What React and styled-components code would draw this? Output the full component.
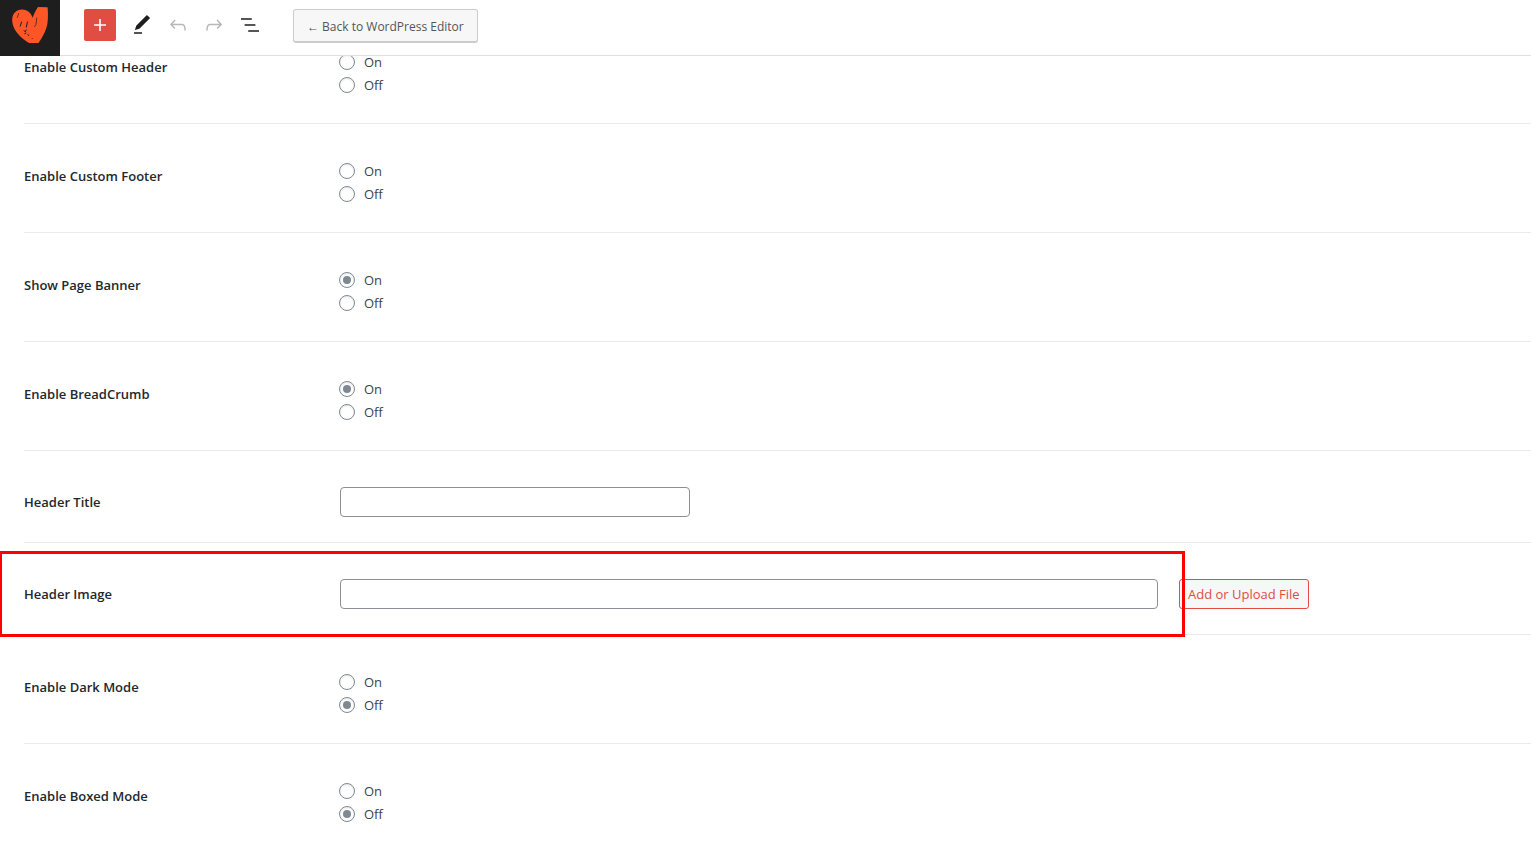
import React, { useLayoutEffect, useRef } from 'react';
import styled, { createGlobalStyle } from 'styled-components';

const GlobalStyle = createGlobalStyle`
	*, *::before, *::after {
		box-sizing: border-box;
	}
	body {
		margin: 0;
		background: #fff;
		color: #3c434a;
		font-family: 'Open Sans', 'Noto Sans', sans-serif;
		font-size: 13px;
	}
`;

const Shell = styled.div`
	display: flex;
	flex-direction: column;
	height: 100vh;
	overflow: hidden;
`;

const Header = styled.header`
	display: flex;
	flex: none;
	height: 56px;
	border-bottom: 1px solid #e0e0e0;
`;

const SiteLink = styled.a`
	flex: none;
	width: 60px;
	height: 56px;
	background: #1e1e1e;

	svg {
		display: block;
	}
`;

const Toolbar = styled.div`
	display: flex;
	align-items: flex-start;
	padding: 9px 24px 0;
`;

const InserterButton = styled.button`
	display: flex;
	align-items: center;
	justify-content: center;
	width: 32px;
	height: 32px;
	margin-right: 8px;
	padding: 0;
	border: 0;
	border-radius: 2px;
	background: #e14d43;
	color: #fff;
`;

const ToolButton = styled.button`
	display: flex;
	align-items: center;
	justify-content: center;
	width: 36px;
	height: 32px;
	padding: 0;
	border: 0;
	background: none;
	color: ${(props) => (props.disabled ? '#b8b8b8' : '#1e1e1e')};
`;

const BackButton = styled.button`
	height: 34px;
	margin-left: 25px;
	padding: 2px 13px 0;
	border: 1px solid #ccc;
	border-bottom-width: 2px;
	border-radius: 3px;
	background: #f7f7f7;
	color: #555;
	font-family: inherit;
	font-size: 12px;
	line-height: 28px;
	white-space: nowrap;
`;

const Main = styled.main`
	flex: 1;
	min-height: 0;
	padding-left: 24px;
	overflow-x: hidden;
	overflow-y: auto;
	scrollbar-width: none;
`;

const Row = styled.div`
	display: grid;
	grid-template-columns: 315px minmax(0, 1fr);
	padding: 36px 0 ${(props) => (props.$compact ? '25px' : '26px')};
	border-bottom: 1px solid #e9e9e9;
`;

const RowLabel = styled.div`
	padding-top: ${(props) => (props.$compact ? '4px' : '5px')};
	color: #23282d;
	font-size: 13px;
	font-weight: 600;
	line-height: 22px;
`;

const Option = styled.label`
	display: flex;
	align-items: flex-start;
	gap: 9px;
	width: max-content;
	height: 23px;
	line-height: 23px;
`;

const Radio = styled.input`
	appearance: none;
	display: grid;
	place-content: center;
	width: 16px;
	height: 16px;
	margin: 3px 0 0;
	border: 1px solid #7e8993;
	border-radius: 50%;
	background: #fff;
	box-shadow: inset 0 1px 2px rgba(0, 0, 0, 0.1);

	&:checked::before {
		content: '';
		width: 8px;
		height: 8px;
		border-radius: 50%;
		background: #7e8993;
	}
`;

const Field = styled.div`
	display: flex;
	gap: 21px;
	margin: 0 1px;
`;

const InputWrap = styled.div`
	position: relative;
	flex: 0 1 ${(props) => (props.$wide ? '818px' : '350px')};
`;

const TextInput = styled.input`
	display: block;
	width: 100%;
	height: 30px;
	padding: 0 8px;
	border: 1px solid #8c8f94;
	border-radius: 4px;
	background: #fff;
	color: #2c3338;
	font: inherit;
`;

const Highlight = styled.div`
	position: absolute;
	top: -28px;
	right: -27px;
	bottom: -28px;
	left: -341px;
	z-index: 1;
	border: 3px solid #f00;
	pointer-events: none;
`;

const UploadButton = styled.button`
	flex: none;
	height: 30px;
	padding: 0 8px;
	border: 1px solid #e14d43;
	border-radius: 3px;
	background: #f6f7f7;
	color: #e14d43;
	font-family: inherit;
	font-size: 13px;
	line-height: 28px;
	white-space: nowrap;
`;

const icons = {
	plus: 'M18 11.2h-5.2V6h-1.6v5.2H6v1.6h5.2V18h1.6v-5.2H18z',
	edit: 'M20.1 5.1L16.9 2 6.2 12.7l-1.3 4.4 4.5-1.3L20.1 5.1zM4 20.8h8v-1.5H4v1.5z',
	undo:
		'M18.3 11.7c-.6-.6-1.4-.9-2.3-.9H6.7l2.9-3.3-1.1-1-4.5 5L8.5 16l1-1-2.7-2.7H16c.5 0 .9.2 1.3.5 1 1 1 3.4 1 4.5v.3h1.5v-.2c0-1.5 0-4.3-1.5-5.7z',
	redo:
		'M15.6 6.5l-1.1 1 2.9 3.3H8c-.9 0-1.7.3-2.3.9-1.4 1.5-1.4 4.2-1.4 5.6v.2h1.5v-.3c0-1.1 0-3.5 1-4.5.3-.3.7-.5 1.3-.5h9.2L14.5 15l1.1 1.1 4.6-4.6-4.6-5z',
	outline: 'M13.8 5.2H3v1.5h10.8V5.2zm-3.6 12v1.5H21v-1.5H10.2zm7.2-6H6.6v1.5h10.8v-1.5z'
};

const Icon = ({ name }) => (
	<svg width="24" height="24" viewBox="0 0 24 24" fill="currentColor" aria-hidden="true">
		<path d={icons[name]} />
	</svg>
);

const HeartLogo = () => (
	<svg width="60" height="56" viewBox="0 0 60 56" aria-hidden="true">
		<path
			fill="#ff5627"
			d="M32.7 17.8 C31.5 13.5 27 9.2 22 9.5 C16.5 9.6 12.5 13.5 12.2 19 C12 25 14.5 30 18.5 34.5 C21.5 38 25.5 41 29 43 L38.5 43 C42.5 37.5 46.5 30 47.5 23 C48.2 18 48 12 47.6 7.2 L38 7 C36 10 34 13.5 32.7 17.8 Z"
		/>
		<g stroke="#1e1e1e" strokeLinecap="round" fill="none">
			<path strokeWidth="0.7" d="M18.6 13.5 L17.3 17.5 M36.8 18 L36 24.5 L34.6 26.5" />
			<path
				strokeWidth="1"
				d="M21.6 22 L20.2 26.2 M27.4 22 L26.4 27 M24 30.5 L25.2 31.8 L26.2 30 M24.8 33.6 L26 33 M28 34.5 L28.8 35.6 M32 38.3 L32.2 38.5"
			/>
		</g>
	</svg>
);

const settings = [
	{ id: 'custom_header', label: 'Enable Custom Header' },
	{ id: 'custom_footer', label: 'Enable Custom Footer' },
	{ id: 'page_banner', label: 'Show Page Banner', value: 'On' },
	{ id: 'breadcrumb', label: 'Enable BreadCrumb', value: 'On' },
	{ id: 'header_title', label: 'Header Title', type: 'text' },
	{ id: 'header_image', label: 'Header Image', type: 'file' },
	{ id: 'dark_mode', label: 'Enable Dark Mode', value: 'Off' },
	{ id: 'boxed_mode', label: 'Enable Boxed Mode', value: 'Off' }
];

const RadioRow = ({ id, label, value }) => (
	<Row role="radiogroup" aria-labelledby={`${id}_label`}>
		<RowLabel id={`${id}_label`}>{label}</RowLabel>
		<div>
			{['On', 'Off'].map((option) => (
				<Option key={option} htmlFor={`${id}_${option}`}>
					<Radio
						type="radio"
						id={`${id}_${option}`}
						name={id}
						value={option}
						defaultChecked={option === value}
					/>
					{option}
				</Option>
			))}
		</div>
	</Row>
);

const TextRow = ({ id, label, type }) => (
	<Row $compact>
		<RowLabel as="label" htmlFor={id} $compact>
			{label}
		</RowLabel>
		<Field>
			<InputWrap $wide={type === 'file'}>
				<TextInput type="text" id={id} name={id} />
				{type === 'file' && <Highlight />}
			</InputWrap>
			{type === 'file' && <UploadButton type="button">Add or Upload File</UploadButton>}
		</Field>
	</Row>
);

const App = () => {
	const main = useRef(null);

	// the first row sits partly under the header
	useLayoutEffect(() => {
		main.current.scrollTop = 41;
	}, []);

	return (
		<Shell>
			<GlobalStyle />
			<Header>
				<SiteLink href="#" aria-label="View Pages">
					<HeartLogo />
				</SiteLink>
				<Toolbar>
					<InserterButton type="button" aria-label="Add block">
						<Icon name="plus" />
					</InserterButton>
					<ToolButton type="button" aria-label="Tools">
						<Icon name="edit" />
					</ToolButton>
					<ToolButton type="button" aria-label="Undo" disabled>
						<Icon name="undo" />
					</ToolButton>
					<ToolButton type="button" aria-label="Redo" disabled>
						<Icon name="redo" />
					</ToolButton>
					<ToolButton type="button" aria-label="List View">
						<Icon name="outline" />
					</ToolButton>
					<BackButton type="button">← Back to WordPress Editor</BackButton>
				</Toolbar>
			</Header>
			<Main ref={main}>
				{settings.map((setting) =>
					setting.type ? (
						<TextRow key={setting.id} {...setting} />
					) : (
						<RadioRow key={setting.id} {...setting} />
					)
				)}
			</Main>
		</Shell>
	);
};

export default App;
